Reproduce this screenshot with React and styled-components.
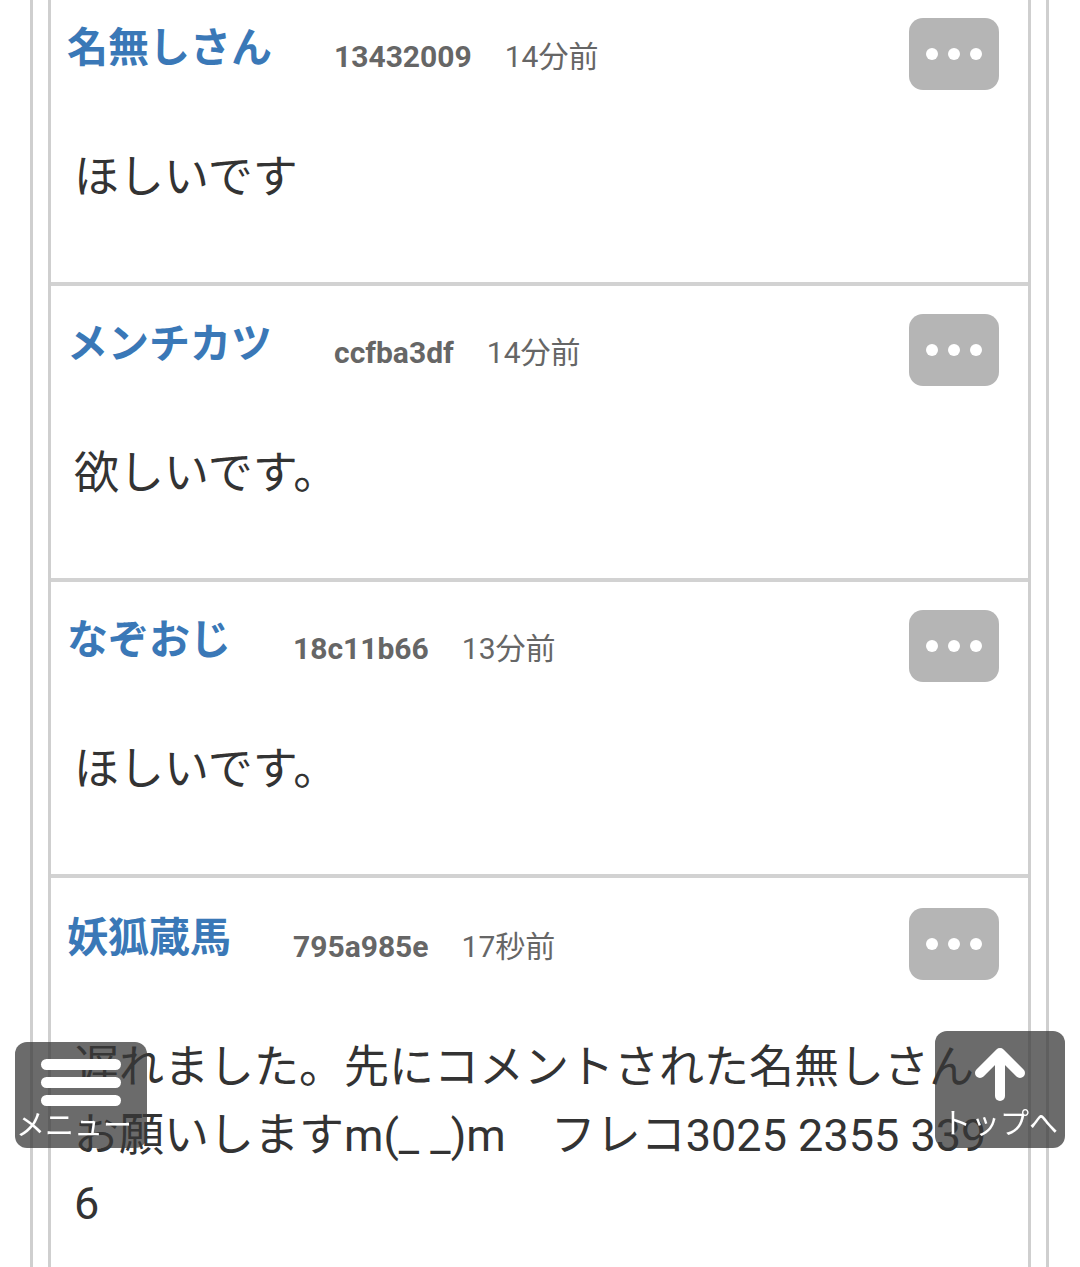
import styled, { createGlobalStyle } from 'styled-components';

const GlobalStyle = createGlobalStyle`
  html, body {
    margin: 0;
    padding: 0;
    background: #fff;
    overflow: hidden;
  }
  body {
    font-family: Roboto, "Noto Sans CJK JP", sans-serif;
  }
`

const Frame = styled.div`
  margin-left: 30px;
  width: 983px;
  border-left: 3px solid #cfcfcf;
  border-right: 3px solid #cfcfcf;
  padding: 0 15px;
  box-sizing: content-box;
  min-height: 1267px;
`

const List = styled.div`
  margin-top: -10px;
  min-height: 1310px;
  display: flex;
  flex-direction: column;
  border-left: 3px solid #cfcfcf;
  border-right: 3px solid #cfcfcf;
`

const Card = styled.article`
  padding: 28px 29px 70px 16px;
  border-bottom: 4px solid #d2d2d2;
  &:last-child {
    flex: 1;
    padding-top: 30px;
  }
`

const Header = styled.div`
  display: flex;
  align-items: flex-start;
  justify-content: space-between;
`

const Meta = styled.div`
  display: flex;
  align-items: flex-start;
  padding-top: 2px;
`

const Name = styled.span`
  font-family: "Noto Sans CJK JP", sans-serif;
  font-size: 41px;
  font-weight: 700;
  line-height: 48px;
  color: #3a78b7;
  margin-right: 62px;
`

const Id = styled.span`
  font-family: Roboto, sans-serif;
  font-size: 30px;
  font-weight: 700;
  line-height: 36px;
  margin-top: 19px;
  color: #666;
  margin-right: 33px;
`

const Time = styled.span`
  font-family: Roboto, "Noto Sans CJK JP", sans-serif;
  font-size: 30px;
  line-height: 36px;
  margin-top: 19px;
  color: #666;
`

const MoreButton = styled.button`
  width: 90px;
  height: 72px;
  border: none;
  border-radius: 14px;
  background: #b5b5b5;
  display: flex;
  align-items: center;
  justify-content: center;
  gap: 10px;
  padding: 0;
  flex-shrink: 0;
`

const Dot = styled.span`
  width: 12px;
  height: 12px;
  border-radius: 50%;
  background: #fff;
`

const Body = styled.p`
  margin: 54px 0 0 7px;
  font-family: Roboto, "Noto Sans CJK JP", sans-serif;
  font-size: 45px;
  line-height: 68px;
  color: #333;
  word-break: break-all;
`

const FloatButton = styled.div`
  position: fixed;
  bottom: 119px;
  ${p => (p.side === 'left' ? 'left: 15px;' : 'right: 15px;')}
  width: ${p => p.w}px;
  height: ${p => p.h}px;
  border-radius: 12px;
  background: rgba(55, 55, 55, 0.74);
  display: flex;
  flex-direction: column;
  align-items: center;
  justify-content: flex-end;
  overflow: visible;
`

const FloatLabel = styled.span`
  font-family: "Noto Sans CJK JP", sans-serif;
  font-size: 29px;
  line-height: 30px;
  color: #fff;
  white-space: nowrap;
  margin-bottom: ${p => p.mb || 12}px;
  margin-right: ${p => p.shift || 0}px;
`

const Burger = styled.div`
  display: flex;
  flex-direction: column;
  gap: 7px;
  margin-bottom: 2px;
`

const Bar = styled.span`
  display: block;
  width: 80px;
  height: 11px;
  border-radius: 6px;
  background: #fff;
`

const posts = [
  { name: '名無しさん', id: '13432009', time: '14分前', text: 'ほしいです' },
  { name: 'メンチカツ', id: 'ccfba3df', time: '14分前', text: '欲しいです。' },
  { name: 'なぞおじ', id: '18c11b66', time: '13分前', text: 'ほしいです。' },
  {
    name: '妖狐蔵馬',
    id: '795a985e',
    time: '17秒前',
    text: '遅れました。先にコメントされた名無しさんお願いしますm(_ _)m　フレコ3025 2355 3396',
  },
];

function ArrowUp() {
  return (
    <svg width="56" height="56" viewBox="0 0 56 56" fill="none" stroke="#fff"
      strokeWidth="10" strokeLinecap="round" strokeLinejoin="round" style={{ marginBottom: 4 }}>
      <path d="M28 50V8" />
      <path d="M8 27L28 7L48 27" />
    </svg>
  );
}

function Post({ post }) {
  return (
    <Card>
      <Header>
        <Meta>
          <Name>{post.name}</Name>
          <Id>{post.id}</Id>
          <Time>{post.time}</Time>
        </Meta>
        <MoreButton aria-label="more">
          <Dot />
          <Dot />
          <Dot />
        </MoreButton>
      </Header>
      <Body>{post.text}</Body>
    </Card>
  );
}

export default function App() {
  return (
    <>
      <GlobalStyle />
      <Frame>
        <List>
          {posts.map(p => (
            <Post key={p.id} post={p} />
          ))}
        </List>
      </Frame>
      <FloatButton side="left" w={132} h={106}>
        <Burger>
          <Bar />
          <Bar />
          <Bar />
        </Burger>
        <FloatLabel mb={10} shift={14}>メニュー</FloatLabel>
      </FloatButton>
      <FloatButton side="right" w={130} h={117}>
        <ArrowUp />
        <FloatLabel>トップへ</FloatLabel>
      </FloatButton>
    </>
  );
}
